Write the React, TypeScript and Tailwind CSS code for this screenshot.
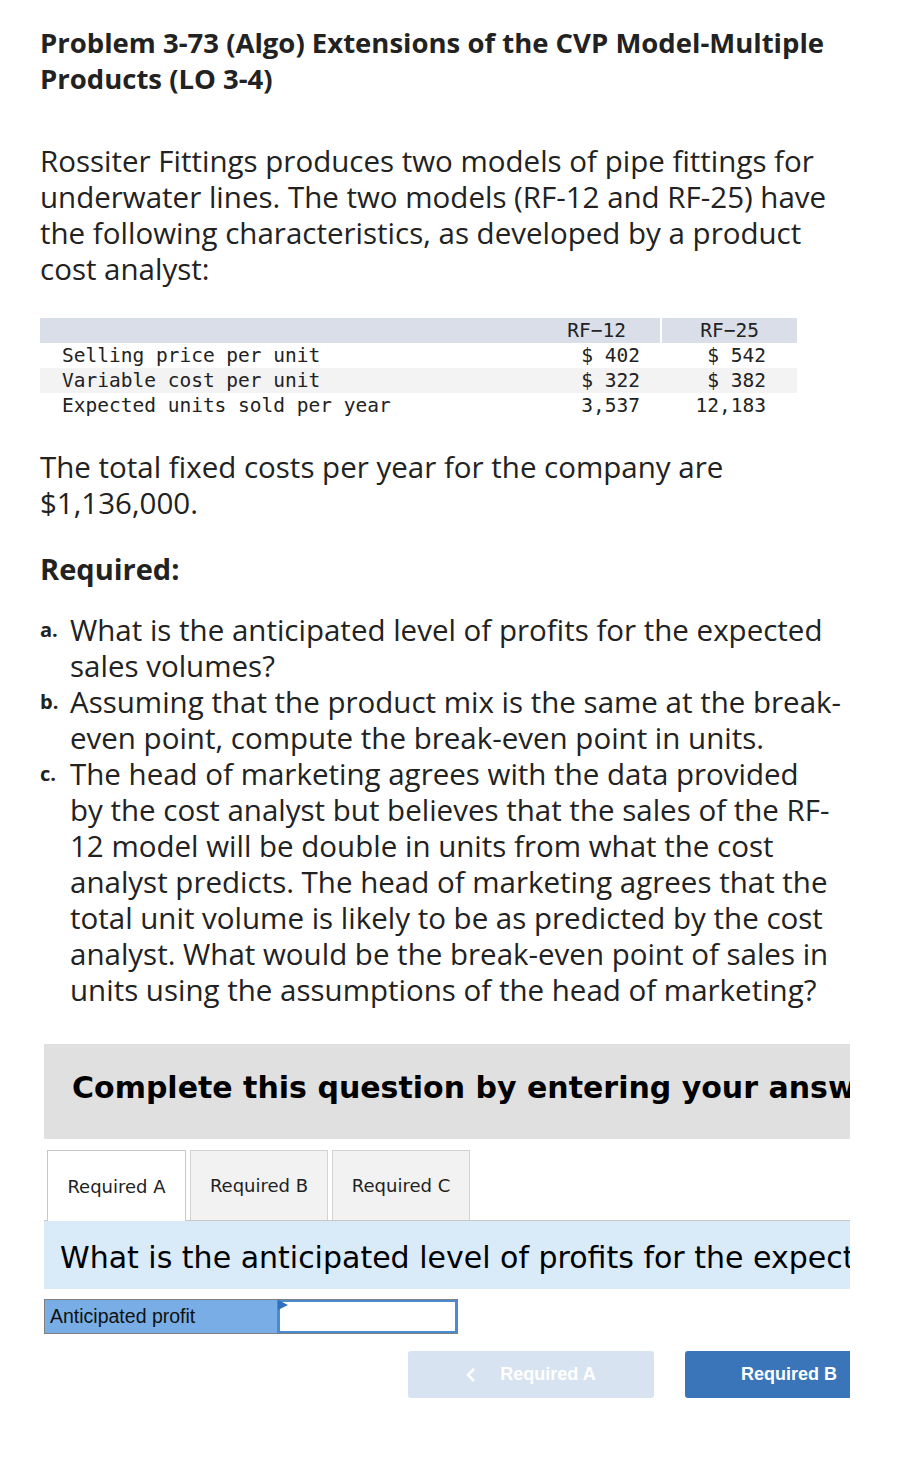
import React from "react";

const body = { fontFamily: "'Open Sans', 'Noto Sans', sans-serif" };
const mono = { fontFamily: "'DejaVu Sans Mono', monospace" };
const verd = { fontFamily: "'DejaVu Sans', Verdana, sans-serif" };
const arial = { fontFamily: "'Liberation Sans', Arial, sans-serif" };

export default function App() {
  return (
    <div className="w-[924px] min-h-[1471px] bg-white overflow-hidden text-[#222]" style={body}>
      <div className="pl-[40px] pt-[25px]">
        <h1 className="text-[27.5px] leading-[36px] font-bold text-[#222] whitespace-nowrap">
          Problem 3-73 (Algo) Extensions of the CVP Model-Multiple
          <br />
          Products (LO 3-4)
        </h1>

        <p className="mt-[46px] text-[29.5px] leading-[36px] whitespace-nowrap">
          Rossiter Fittings produces two models of pipe fittings for
          <br />
          underwater lines. The two models (RF-12 and RF-25) have
          <br />
          the following characteristics, as developed by a product
          <br />
          cost analyst:
        </p>

        <div className="mt-[31px] w-[757px] text-[19.5px] leading-[25px] text-[#222]" style={mono}>
          <div className="flex bg-[#d9dee9]">
            <div className="w-[515px]" />
            <div className="w-[107px] text-right pr-[34px] border-r-2 border-white">RF−12</div>
            <div className="w-[135px] text-right pr-[38px]">RF−25</div>
          </div>
          <div className="flex bg-white">
            <div className="w-[515px] pl-[22px]">Selling price per unit</div>
            <div className="w-[107px] text-right pr-[22px]">$ 402</div>
            <div className="w-[135px] text-right pr-[31px]">$ 542</div>
          </div>
          <div className="flex bg-[#f3f3f3]">
            <div className="w-[515px] pl-[22px]">Variable cost per unit</div>
            <div className="w-[107px] text-right pr-[22px]">$ 322</div>
            <div className="w-[135px] text-right pr-[31px]">$ 382</div>
          </div>
          <div className="flex bg-white">
            <div className="w-[515px] pl-[22px]">Expected units sold per year</div>
            <div className="w-[107px] text-right pr-[22px]">3,537</div>
            <div className="w-[135px] text-right pr-[31px]">12,183</div>
          </div>
        </div>

        <p className="mt-[31px] text-[29.5px] leading-[36px] whitespace-nowrap">
          The total fixed costs per year for the company are
          <br />
          $1,136,000.
        </p>

        <h2 className="mt-[30px] text-[29px] leading-[36px] font-bold">Required:</h2>

        <ol className="mt-[25px] text-[29.5px] leading-[36px] whitespace-nowrap">
          <li className="flex">
            <span className="w-[30px] text-[20px] font-bold shrink-0">a.</span>
            <span>
              What is the anticipated level of profits for the expected
              <br />
              sales volumes?
            </span>
          </li>
          <li className="flex">
            <span className="w-[30px] text-[20px] font-bold shrink-0">b.</span>
            <span>
              Assuming that the product mix is the same at the break-
              <br />
              even point, compute the break-even point in units.
            </span>
          </li>
          <li className="flex">
            <span className="w-[30px] text-[20px] font-bold shrink-0">c.</span>
            <span>
              The head of marketing agrees with the data provided
              <br />
              by the cost analyst but believes that the sales of the RF-
              <br />
              12 model will be double in units from what the cost
              <br />
              analyst predicts. The head of marketing agrees that the
              <br />
              total unit volume is likely to be as predicted by the cost
              <br />
              analyst. What would be the break-even point of sales in
              <br />
              units using the assumptions of the head of marketing?
            </span>
          </li>
        </ol>
      </div>

      <div className="ml-[44px] w-[806px] overflow-hidden mt-[36px]">
        <div className="h-[95px] bg-[#e0e0e0] flex items-center pl-[28px] pb-[8px] whitespace-nowrap" style={verd}>
          <span className="text-[30px] font-bold text-black">Complete this question by entering your answers in the tabs below.</span>
        </div>

        <div className="mt-[11px] flex items-end gap-[4px] pl-[3px] border-b border-[#c8c8c8]" style={verd}>
          <div className="w-[139px] h-[71px] bg-white border border-[#c8c8c8] border-b-0 -mb-px flex items-center justify-center text-[18px] text-[#222]">
            Required A
          </div>
          <div className="w-[138px] h-[70px] bg-[#f2f2f2] border border-[#d2d2d2] border-b-0 flex items-center justify-center text-[18px] text-[#222]">
            Required B
          </div>
          <div className="w-[138px] h-[70px] bg-[#f2f2f2] border border-[#d2d2d2] border-b-0 flex items-center justify-center text-[18px] text-[#222]">
            Required C
          </div>
        </div>

        <div className="h-[68px] bg-[#d9eaf9] flex items-center pl-[16px] pt-[4px] whitespace-nowrap" style={verd}>
          <span className="text-[30px] text-black">What is the anticipated level of profits for the expected sales volumes?</span>
        </div>

        <div className="mt-[10px] flex w-[414px] h-[35px] border border-[#7f7f7f]" style={arial}>
          <div className="w-[233px] bg-[#78aee5] border-r border-[#7f7f7f] flex items-center pl-[5px] text-[19.5px] text-[#111]">
            Anticipated profit
          </div>
          <div className="relative flex-1 bg-white border-2 border-[#4a8ad0]">
            <svg className="absolute -left-[2px] -top-[2px]" width="10" height="12" viewBox="0 0 10 12">
              <polygon points="0,0 10,5 0,10" fill="#2f6fc0" />
            </svg>
          </div>
        </div>

        <div className="mt-[17px] flex justify-end gap-[31px] whitespace-nowrap" style={arial}>
          <div className="w-[246px] h-[47px] bg-[#d8e3f1] rounded-[3px] flex items-center justify-center gap-[24px] text-white font-bold text-[18px]">
            <svg width="10" height="16" viewBox="0 0 10 16">
              <polyline points="8,2 2,8 8,14" fill="none" stroke="white" strokeWidth="2.5" />
            </svg>
            <span>Required A</span>
          </div>
          <div className="w-[178px] h-[47px] bg-[#3a75b9] rounded-l-[3px] flex items-center pl-[56px] text-white font-bold text-[18px] -mr-[13px]">
            Required B
          </div>
        </div>
      </div>
    </div>
  );
}
